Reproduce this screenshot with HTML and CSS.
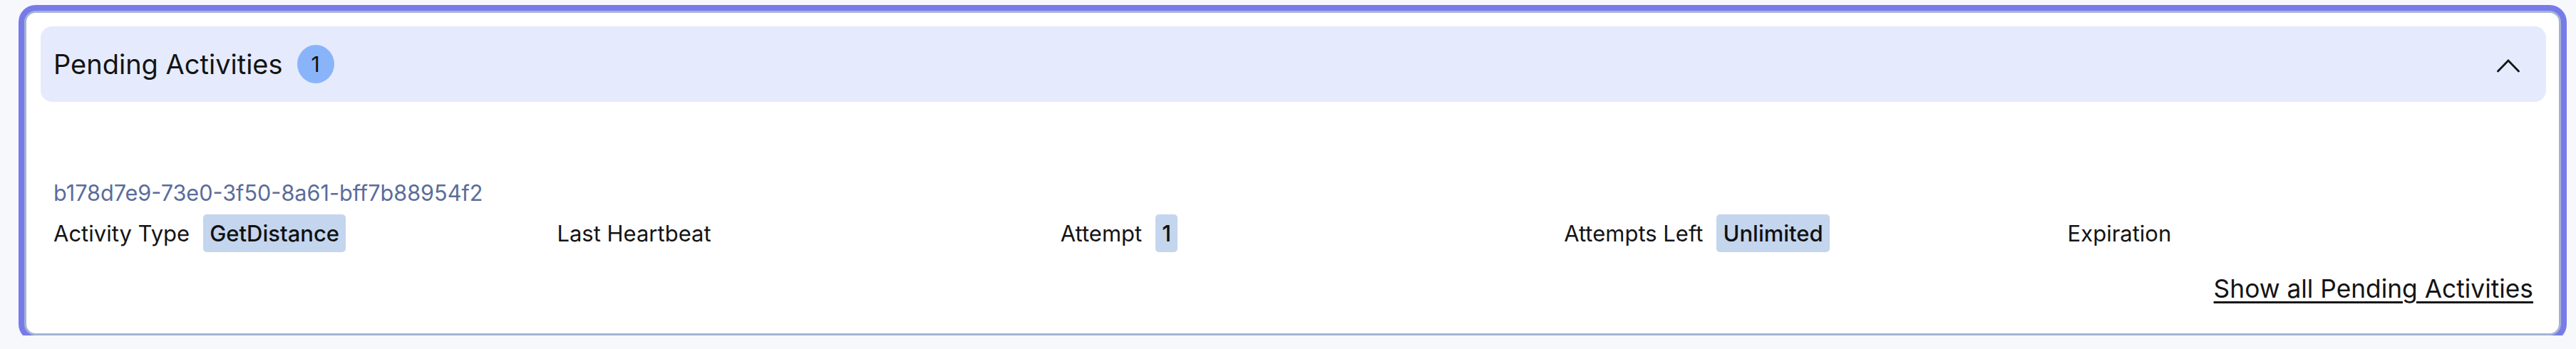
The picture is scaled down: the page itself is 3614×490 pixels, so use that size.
FILE: index.html
```html
<!DOCTYPE html>
<html lang="en">
<head>
<meta charset="utf-8">
<title>Pending Activities</title>
<link rel="stylesheet" href="styles.css">
</head>
<body>
  <section class="card">
    <header class="card-header">
      <div class="title-group">
        <h2 class="title">Pending Activities</h2>
        <span class="count-badge">1</span>
      </div>
      <svg class="chevron" width="32" height="20" viewBox="0 0 32 20" aria-hidden="true">
        <polyline points="1.5,18 16,3 30.5,18" fill="none" stroke="#141414" stroke-width="2.8" stroke-linecap="round" stroke-linejoin="miter"/>
      </svg>
    </header>
    <div class="card-body">
      <div class="activity-id">b178d7e9-73e0-3f50-8a61-bff7b88954f2</div>
      <div class="details">
        <div class="detail"><span class="label">Activity Type</span><span class="chip">GetDistance</span></div>
        <div class="detail"><span class="label">Last Heartbeat</span></div>
        <div class="detail"><span class="label">Attempt</span><span class="chip">1</span></div>
        <div class="detail"><span class="label">Attempts Left</span><span class="chip">Unlimited</span></div>
        <div class="detail"><span class="label">Expiration</span></div>
      </div>
      <div class="footer">
        <a class="show-all" href="#">Show all Pending Activities</a>
      </div>
    </div>
  </section>
</body>
</html>
```
FILE: styles.css
```css
* { box-sizing: border-box; }

html, body {
  margin: 0;
  padding: 0;
}

body {
  background: #f7f8fc;
  font-family: Inter, "Noto Sans", "Liberation Sans", sans-serif;
  color: #141414;
  padding: 15px 21px 0 34px;
}

.card {
  background: #ffffff;
  border: 3px solid #a4b3d3;
  border-radius: 16px;
  box-shadow: 0 0 0 8px #777bea;
  padding: 19px 18px 0 20px;
  height: 456px;
}

.card-header {
  display: flex;
  align-items: center;
  justify-content: space-between;
  height: 106px;
  background: #e5ebfd;
  border-radius: 16px;
  padding: 0 37px 0 18px;
}

.title-group {
  display: flex;
  align-items: center;
  gap: 20px;
}

.title {
  margin: 0;
  font-size: 38px;
  font-weight: 400;
  line-height: 52px;
  color: #141414;
}

.count-badge {
  display: flex;
  align-items: center;
  justify-content: center;
  width: 52px;
  height: 54px;
  border-radius: 50%;
  background: #8ab4fa;
  font-size: 30px;
  line-height: 1;
  color: #111111;
}

.chevron {
  display: block;
  margin-top: 3px;
}

.card-body {
  padding: 108px 18px 0 18px;
}

.activity-id {
  font-size: 30.6px;
  line-height: 40px;
  color: #5a6d9a;
}

.details {
  display: grid;
  grid-template-columns: repeat(5, 1fr);
  column-gap: 53px;
  margin-top: 10px;
}

.detail {
  display: flex;
  align-items: center;
  gap: 19px;
  height: 53px;
}

.label {
  font-size: 31px;
  line-height: 40px;
  color: #141414;
  white-space: nowrap;
}

.chip {
  display: flex;
  align-items: center;
  height: 53px;
  padding: 0 9px;
  border-radius: 5px;
  background: #c4d5ee;
  font-size: 31px;
  font-weight: 500;
  color: #111111;
  white-space: nowrap;
}

.footer {
  display: flex;
  justify-content: flex-end;
  margin-top: 32px;
}

.show-all {
  font-size: 35.3px;
  line-height: 40px;
  color: #141414;
  text-decoration: underline;
  text-underline-offset: 5px;
  text-decoration-thickness: 3px;
}
```
